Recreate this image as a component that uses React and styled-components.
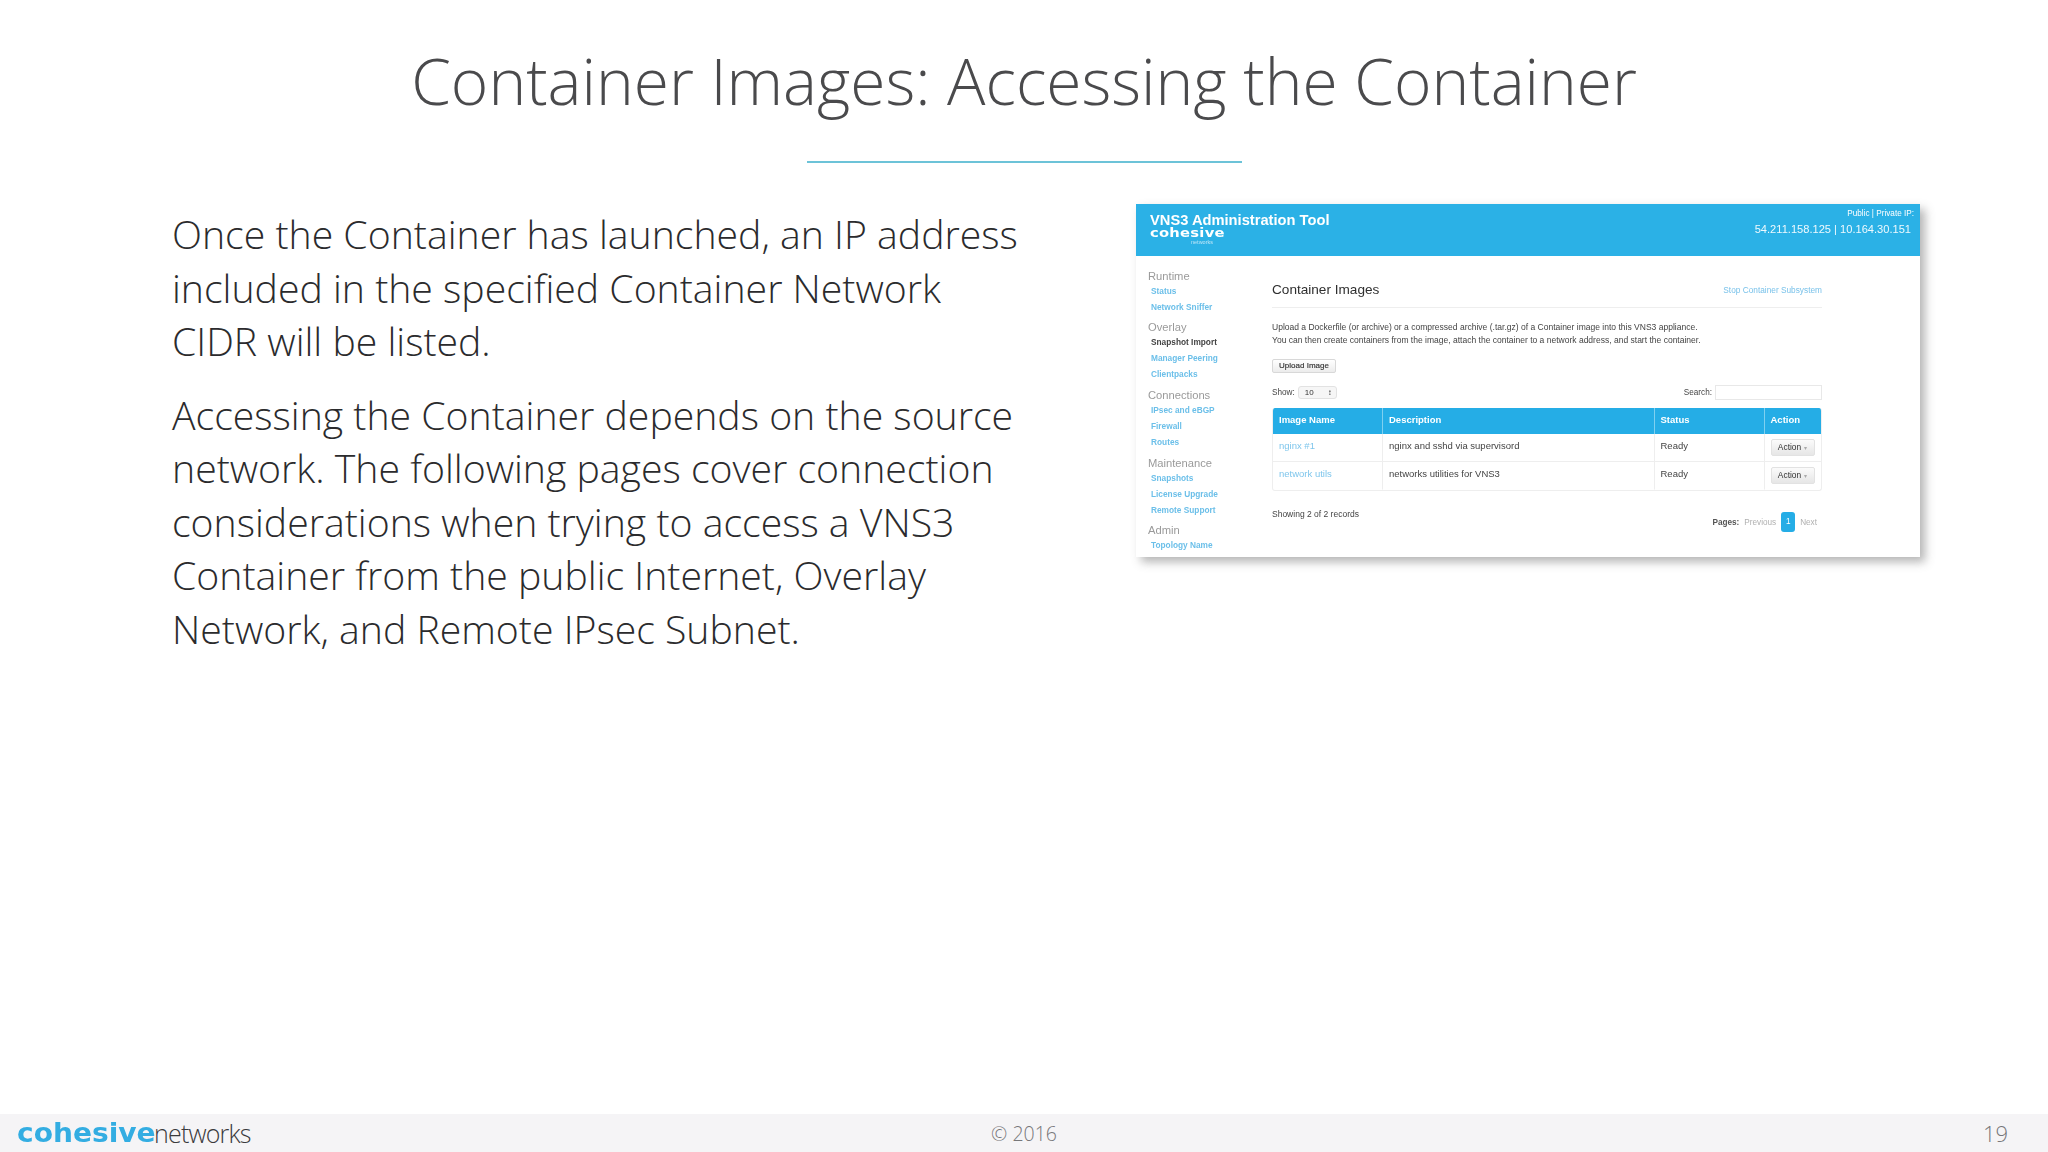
import React from "react";
import styled, { createGlobalStyle } from "styled-components";

const Global = createGlobalStyle`
  html, body { margin: 0; padding: 0; background: #fff; }
  * { box-sizing: border-box; }
`;

const Page = styled.div`
  width: 2048px; height: 1152px; display: flex; flex-direction: column; overflow: hidden;
  font-family: "Open Sans", sans-serif; font-weight: 300; color: #3c3c3e; background: #fff;
`;
const Header = styled.header`
  display: flex; flex-direction: column; align-items: center; padding-top: 34px; height: 204px;
`;
const Title = styled.h1`
  margin: 0; font-size: 64px; line-height: 94px; font-weight: 300; color: #4a4a4c; white-space: nowrap;
`;
const Rule = styled.div`
  width: 435px; height: 2px; margin-top: 33px; background: #6cc3d8;
`;
const Main = styled.main`
  flex: 1; display: flex; padding-left: 172px;
`;
const Copy = styled.div`
  width: 964px; padding-top: 3px;
`;
const Para = styled.p`
  margin: 0 0 20px; max-width: 860px; font-size: 39.2px; line-height: 53.5px; color: #2b2b2d;
`;
const Shot = styled.section`
  width: 784px; height: 353px; background: #fff; display: flex; flex-direction: column;
  box-shadow: 5px 5px 9px rgba(90, 90, 90, 0.45);
  font-family: "Liberation Sans", Arial, sans-serif; font-weight: 400; filter: blur(0.45px);
`;
const ShotTop = styled.div`
  flex: none; height: 52px; background: #2bb1e6; color: #fff; display: flex; justify-content: space-between;
  padding: 0 6px 0 14px;
`;
const Brand = styled.div` display: flex; flex-direction: column; padding-top: 7px; `;
const ToolName = styled.div` font-size: 14.7px; line-height: 18px; font-weight: 700; white-space: nowrap; `;
const MiniLogo = styled.div`
  font-family: "DejaVu Sans", sans-serif; font-size: 11.5px; line-height: 9px; font-weight: 700;
  transform: scaleX(1.28); transform-origin: left center; letter-spacing: 0.2px;
`;
const MiniSub = styled.div`
  font-size: 5.5px; line-height: 8px; padding-left: 41px; color: #bfe6f7;
`;
const IpBlock = styled.div` text-align: right; padding-top: 4px; `;
const IpLabel = styled.div` font-size: 8.2px; line-height: 12px; `;
const IpValue = styled.div` font-size: 11.1px; line-height: 18px; padding-right: 3px; color: #eef9fe; `;
const ShotBody = styled.div` flex: 1; display: flex; `;
const Side = styled.nav`
  width: 136px; padding: 12.5px 0 0 12px; display: flex; flex-direction: column;
`;
const SideHead = styled.div`
  font-size: 11.2px; line-height: 14px; color: #9a9a9a; margin-top: ${p => (p.$first ? 0 : 5.7)}px;
`;
const SideItem = styled.div`
  font-size: 8.3px; line-height: 16px; font-weight: 700; padding-left: 3px;
  color: ${p => (p.$active ? "#444" : "#6bbfe9")};
`;
const Content = styled.div` width: 550px; display: flex; flex-direction: column; `;
const ContentHead = styled.div`
  height: 52px; padding-top: 16px; display: flex; justify-content: space-between; align-items: center;
  border-bottom: 1px solid #eeeeee;
`;
const ContentTitle = styled.div` font-size: 13.6px; color: #2f2f2f; `;
const StopLink = styled.div` font-size: 8.3px; color: #79c2ea; `;
const Desc = styled.p`
  margin: 13px 0 0; font-size: 8.53px; line-height: 13px; color: #444; white-space: nowrap;
`;
const Button = styled.div`
  width: 64px; height: 14px; margin-top: 12px; border: 1px solid #d8d8d8; border-radius: 2px;
  background: linear-gradient(#fff, #ececec); font-size: 8px; line-height: 12px; text-align: center;
  font-weight: 400; color: #333; -webkit-text-stroke: 0.15px #333;
`;
const Controls = styled.div`
  margin-top: 8px; height: 22px; display: flex; justify-content: space-between; align-items: center;
`;
const ControlGroup = styled.div` display: flex; align-items: center; gap: 3px; font-size: 8.2px; color: #444; `;
const SelectBox = styled.div`
  width: 39px; height: 13px; border-radius: 3px; border: 1px solid #e2e2e2; background: #f6f6f6;
  display: flex; justify-content: space-between; align-items: center; padding: 0 4px 0 6px; font-size: 8px; color: #333;
`;
const SearchBox = styled.div` width: 107px; height: 15px; border: 1px solid #e8e8e8; background: #fff; `;
const Table = styled.div`
  margin-top: 5px; display: grid; grid-template-columns: 110px 271.5px 110px 58.5px;
  border-radius: 3px; overflow: hidden; border: 1px solid #eeeeee; border-top: 0;
`;
const Th = styled.div`
  height: 26px; background: #25ade6; color: #fff; font-size: 9.5px; font-weight: 700; line-height: 24px;
  padding-left: 6px; border-right: 1px solid ${p => (p.$last ? "transparent" : "#7fd0f0")};
`;
const Td = styled.div`
  height: 28px; font-size: 9.5px; line-height: 24px; padding-left: 6px; color: ${p => p.$link ? "#7fc6ec" : "#444"};
  border-right: 1px solid ${p => (p.$last ? "transparent" : "#eeeeee")};
  border-bottom: 1px solid ${p => (p.$bottom ? "transparent" : "#eeeeee")};
`;
const ActionBtn = styled.div`
  width: 44px; height: 17px; margin-top: 5px; border: 1px solid #e2e2e2; border-radius: 2px;
  background: linear-gradient(#fbfbfb, #e6e6e6); font-size: 8.4px; line-height: 15px; text-align: center; color: #333;
`;
const Caret = styled.span` color: #aaa; font-size: 6px; margin-left: 3px; `;
const TableFoot = styled.div`
  display: flex; justify-content: space-between; padding-top: 17px; padding-right: 5px;
`;
const Showing = styled.div` font-size: 8.5px; line-height: 12px; color: #444; `;
const Pager = styled.div`
  display: flex; align-items: center; gap: 5px; height: 20px; margin-top: 4px; font-size: 8.2px; color: #b0b0b0;
`;
const PagerLabel = styled.span` color: #555; font-weight: 700; `;
const PageNum = styled.span`
  width: 14px; height: 20px; border-radius: 3px; background: #25ade6; color: #fff; text-align: center; line-height: 20px;
`;
const Footer = styled.footer`
  flex: none; height: 38px; background: #f5f4f6; display: grid; grid-template-columns: 1fr auto 1fr; align-items: center;
  padding: 0 17px;
`;
const Logo = styled.div` display: flex; align-items: center; height: 38px; `;
const LogoMark = styled.span`
  display: inline-block; width: 137px; font-family: "DejaVu Sans", sans-serif; font-weight: 700; font-size: 26px; line-height: 38px;
  color: #33ade2; white-space: nowrap; transform: scaleX(1.08); transform-origin: left center;
`;
const LogoWord = styled.span` font-size: 25px; line-height: 38px; color: #3a3a3c; letter-spacing: -0.8px; `;
const Copyright = styled.div` font-size: 19.5px; color: #77777a; `;
const PageNo = styled.div` font-size: 22px; color: #77777a; text-align: right; padding-right: 23px; `;

const nav = [
  ["Runtime", ["Status", "Network Sniffer"]],
  ["Overlay", ["Snapshot Import", "Manager Peering", "Clientpacks"]],
  ["Connections", ["IPsec and eBGP", "Firewall", "Routes"]],
  ["Maintenance", ["Snapshots", "License Upgrade", "Remote Support"]],
  ["Admin", ["Topology Name"]],
];
const rows = [
  ["nginx #1", "nginx and sshd via supervisord"],
  ["network utils", "networks utilities for VNS3"],
];

export default function App() {
  return (
    <Page>
      <Global />
      <Header>
        <Title>Container Images: Accessing the Container</Title>
        <Rule />
      </Header>
      <Main>
        <Copy>
          <Para>Once the Container has launched, an IP address included in the specified Container Network CIDR will be listed.</Para>
          <Para>Accessing the Container depends on the source network. The following pages cover connection considerations when trying to access a VNS3 Container from the public Internet, Overlay Network, and Remote IPsec Subnet.</Para>
        </Copy>
        <Shot>
          <ShotTop>
            <Brand>
              <ToolName>VNS3 Administration Tool</ToolName>
              <MiniLogo>cohesive</MiniLogo>
              <MiniSub>networks</MiniSub>
            </Brand>
            <IpBlock>
              <IpLabel>Public | Private IP:</IpLabel>
              <IpValue>54.211.158.125 | 10.164.30.151</IpValue>
            </IpBlock>
          </ShotTop>
          <ShotBody>
            <Side>
              {nav.map(([head, items], i) => (
                <React.Fragment key={head}>
                  <SideHead $first={i === 0}>{head}</SideHead>
                  {items.map(item => (
                    <SideItem key={item} $active={item === "Snapshot Import"}>{item}</SideItem>
                  ))}
                </React.Fragment>
              ))}
            </Side>
            <Content>
              <ContentHead>
                <ContentTitle>Container Images</ContentTitle>
                <StopLink>Stop Container Subsystem</StopLink>
              </ContentHead>
              <Desc>
                Upload a Dockerfile (or archive) or a compressed archive (.tar.gz) of a Container image into this VNS3 appliance.<br />
                You can then create containers from the image, attach the container to a network address, and start the container.
              </Desc>
              <Button>Upload Image</Button>
              <Controls>
                <ControlGroup>Show: <SelectBox>10<span>↕</span></SelectBox></ControlGroup>
                <ControlGroup>Search: <SearchBox /></ControlGroup>
              </Controls>
              <Table>
                <Th>Image Name</Th>
                <Th>Description</Th>
                <Th>Status</Th>
                <Th $last>Action</Th>
                {rows.map(([name, desc], i) => (
                  <React.Fragment key={name}>
                    <Td $link $bottom={i === 1}>{name}</Td>
                    <Td $bottom={i === 1}>{desc}</Td>
                    <Td $bottom={i === 1}>Ready</Td>
                    <Td $last $bottom={i === 1}>
                      <ActionBtn>Action<Caret>▾</Caret></ActionBtn>
                    </Td>
                  </React.Fragment>
                ))}
              </Table>
              <TableFoot>
                <Showing>Showing 2 of 2 records</Showing>
                <Pager>
                  <PagerLabel>Pages:</PagerLabel>
                  <span>Previous</span>
                  <PageNum>1</PageNum>
                  <span>Next</span>
                </Pager>
              </TableFoot>
            </Content>
          </ShotBody>
        </Shot>
      </Main>
      <Footer>
        <Logo>
          <LogoMark>cohesive</LogoMark>
          <LogoWord>networks</LogoWord>
        </Logo>
        <Copyright>© 2016</Copyright>
        <PageNo>19</PageNo>
      </Footer>
    </Page>
  );
}
